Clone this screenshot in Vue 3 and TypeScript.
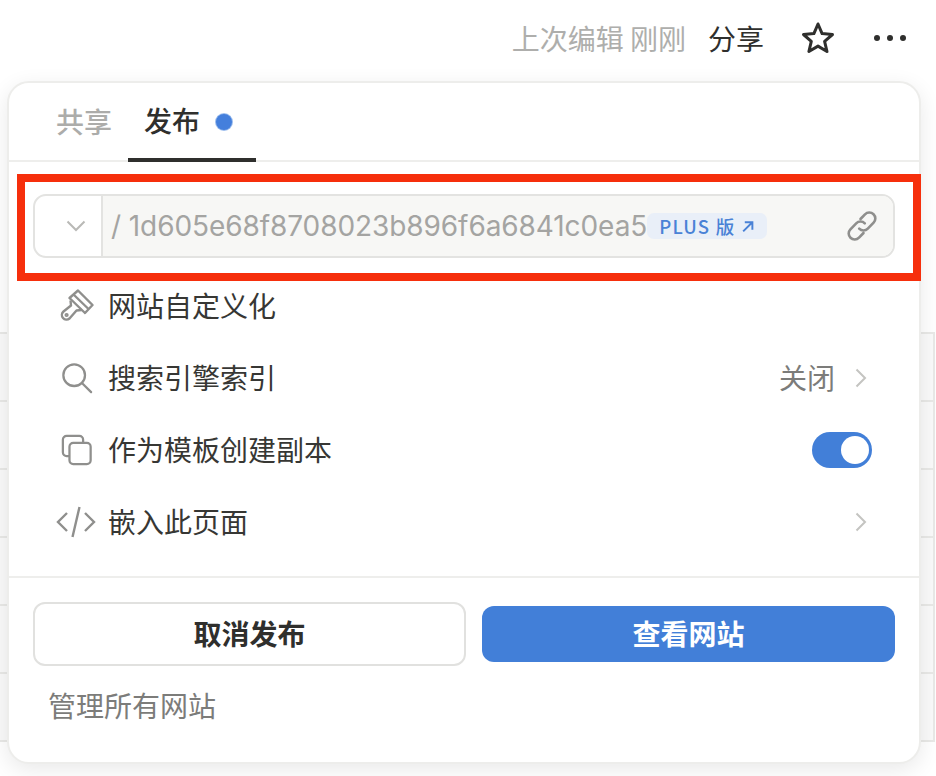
<script setup lang="ts">
const tableRows = [0, 1, 2, 3, 4, 5]
</script>

<template>
  <div class="page">
    <header class="topbar">
      <span class="edited">上次编辑 刚刚</span>
      <span class="share">分享</span>
      <svg class="star" viewBox="0 0 34 34" fill="none" stroke="#2f2f2d" stroke-width="3" stroke-linejoin="round" aria-hidden="true">
        <path d="M17 3l4.100 9.600 10.400.9-7.900 6.800 2.400 10.200L17 25.100 7.900 30.500l2.400-10.200L2.500 13.500l10.400-.9z" />
      </svg>
      <span class="dots"><i></i><i></i><i></i></span>
    </header>

    <div class="table">
      <div v-for="r in tableRows" :key="r" class="table-row"></div>
    </div>

    <section class="popover">
      <nav class="tabs">
        <span class="tab">共享</span>
        <span class="tab active">发布<i class="dot"></i></span>
      </nav>

      <div class="url-wrap">
        <div class="url-box">
          <div class="url-select">
            <svg class="chev-down" viewBox="0 0 20 12" fill="none" stroke="#b9b9b6" stroke-width="2" aria-hidden="true">
              <path d="M1.500 1.500L10 10l8.500-8.500" />
            </svg>
          </div>
          <div class="url-field">
            <span class="url-text">/ 1d605e68f8708023b896f6a6841c0ea5</span>
            <span class="plus">PLUS 版
              <svg class="plus-arrow" viewBox="0 0 12 12" fill="none" stroke="#4a82d6" stroke-width="1.800" aria-hidden="true">
                <path d="M2 10.500l8-8M3.500 2H10.500v7" />
              </svg>
            </span>
            <svg class="link" viewBox="0 0 32 32" fill="none" stroke="#8f8f8d" stroke-width="2.600" stroke-linecap="round" aria-hidden="true">
              <path d="M14.500 9l4.500-4.700a6 6 0 0 1 8.600 8.400l-5.800 6a6 6 0 0 1-8.600 0" />
              <path d="M17.500 23l-4.500 4.700a6 6 0 0 1-8.600-8.400l5.800-6a6 6 0 0 1 8.600 0" />
            </svg>
          </div>
        </div>
      </div>

      <ul class="menu">
        <li class="row">
          <span class="row-icon">
            <svg class="icon brush" viewBox="0 0 34 34" fill="none" stroke="#8f8f8d" stroke-width="2.400" stroke-linejoin="round" aria-hidden="true">
              <path d="M18 1.500L32.500 16 25 24 9.500 9z" />
              <path d="M13.500 5.500L28.500 20" />
              <path d="M10.500 11.500L11 16.500 3.500 22.500A4.300 4.300 0 0 0 9.500 29.500L16.500 21.500 21.500 21" />
              <circle cx="6.600" cy="26" r="0.900" />
            </svg>
          </span>
          <span class="row-label">网站自定义化</span>
        </li>
        <li class="row">
          <span class="row-icon">
            <svg class="icon" viewBox="0 0 34 34" fill="none" stroke="#8f8f8d" stroke-width="2.400" stroke-linecap="round" aria-hidden="true">
              <circle cx="14" cy="14" r="11.500" />
              <path d="M22.500 22.500L32 32" />
            </svg>
          </span>
          <span class="row-label">搜索引擎索引</span>
          <span class="row-value">关闭</span>
          <svg class="chev" viewBox="0 0 12 20" fill="none" stroke="#c4c4c1" stroke-width="2" aria-hidden="true">
            <path d="M1.500 1.500L10 10l-8.500 8.500" />
          </svg>
        </li>
        <li class="row">
          <span class="row-icon">
            <svg class="icon" viewBox="0 0 34 34" fill="none" stroke="#8f8f8d" stroke-width="2.400" aria-hidden="true">
              <path d="M9 23.500H6a4 4 0 0 1-4-4V6a4 4 0 0 1 4-4h13.500a4 4 0 0 1 4 4v3" />
              <rect x="9" y="9.500" width="22.500" height="22.500" rx="4" />
            </svg>
          </span>
          <span class="row-label">作为模板创建副本</span>
          <span class="switch"><i></i></span>
        </li>
        <li class="row">
          <span class="row-icon">
            <svg class="icon code" viewBox="0 0 40 32" fill="none" stroke="#8f8f8d" stroke-width="2.400" aria-hidden="true">
              <path d="M11 7l-9 9 9 9M29 7l9 9-9 9M23.500 1l-7 30" />
            </svg>
          </span>
          <span class="row-label">嵌入此页面</span>
          <svg class="chev push" viewBox="0 0 12 20" fill="none" stroke="#c4c4c1" stroke-width="2" aria-hidden="true">
            <path d="M1.500 1.500L10 10l-8.500 8.500" />
          </svg>
        </li>
      </ul>

      <footer class="footer">
        <div class="actions">
          <button class="btn ghost">取消发布</button>
          <button class="btn primary">查看网站</button>
        </div>
        <a class="manage">管理所有网站</a>
      </footer>
    </section>

    <div class="annotation"></div>
  </div>
</template>

<style>
html,
body {
  margin: 0;
  background: #fff;
}
</style>

<style scoped>
.page {
  position: relative;
  width: 936px;
  height: 776px;
  overflow: hidden;
  background: #fff;
  font-family: "Noto Sans CJK SC", "Liberation Sans", sans-serif;
  color: #373734;
}

.topbar {
  height: 75px;
  display: flex;
  align-items: center;
  justify-content: flex-end;
  padding-right: 30px;
  font-size: 28px;
  box-sizing: border-box;
}

.edited {
  color: #aeaeac;
  margin-right: 22px;
}

.share {
  color: #2f2f2d;
  margin-right: 37px;
}

.star {
  width: 34px;
  height: 34px;
  margin-right: 39px;
}

.dots {
  display: flex;
  gap: 7px;

  i {
    width: 6px;
    height: 6px;
    border-radius: 50%;
    background: #2f2f2d;
  }
}

.table {
  margin-top: 257px;
  width: 935px;
  border-right: 2px solid #e9e9e7;
  border-top: 2px solid #e9e9e7;
  box-sizing: border-box;
}

.table-row {
  height: 68px;
  box-sizing: border-box;
  border-bottom: 2px solid #e9e9e7;
  background: #fafafa;
}

.popover {
  position: absolute;
  left: 7px;
  top: 81px;
  width: 914px;
  height: 683px;
  box-sizing: border-box;
  background: #fff;
  border: 2px solid #ededeb;
  border-radius: 22px;
  box-shadow: 0 6px 22px rgba(0, 0, 0, 0.09);
}

.tabs {
  height: 79px;
  display: flex;
  box-sizing: border-box;
  border-bottom: 2px solid #eeeeec;
  padding-left: 31px;
}

.tab {
  display: flex;
  align-items: center;
  height: 79px;
  box-sizing: border-box;
  padding: 0 16px 3px;
  font-size: 28px;
  font-weight: 500;
  color: #acacaa;
}

.tab.active {
  width: 128px;
  color: #2f2f2d;
  border-bottom: 4px solid #2f2f2d;
  padding-top: 1px;
}

.dot {
  width: 16px;
  height: 16px;
  margin: 5px 0 0 16px;
  border-radius: 50%;
  background: #447fdc;
  box-shadow: 0 0 0 1px #9dbeee;
}

.url-wrap {
  padding: 32px 24px 0;
}

.url-box {
  height: 64px;
  display: flex;
  box-sizing: border-box;
  border: 2px solid #e3e3e1;
  border-radius: 13px;
  overflow: hidden;
}

.url-select {
  width: 68px;
  display: flex;
  align-items: center;
  justify-content: center;
  box-sizing: border-box;
  border-right: 2px solid #e3e3e1;
}

.chev-down {
  width: 20px;
  height: 12px;
  margin-left: 16px;
}

.url-field {
  flex: 1;
  display: flex;
  align-items: center;
  background: #f7f7f5;
  padding-left: 8px;
}

.url-text {
  font-family: "Inter", "Liberation Sans", sans-serif;
  font-size: 28px;
  letter-spacing: -0.08px;
  color: #a4a4a2;
  white-space: nowrap;
}

.plus {
  display: flex;
  align-items: center;
  height: 26px;
  padding: 0 13px 0 12px;
  border-radius: 7px;
  background: #e9eff8;
  font-size: 18.500px;
  font-weight: 500;
  letter-spacing: 1.200px;
  color: #4a82d6;
  white-space: nowrap;
}

.plus-arrow {
  width: 13px;
  height: 13px;
  margin-left: 6px;
}

.link {
  width: 32px;
  height: 32px;
  margin-left: auto;
  margin-right: 15px;
}

.menu {
  list-style: none;
  margin: 12px 0 0;
  padding: 0 52px 0 0;
}

.row {
  height: 72px;
  display: flex;
  align-items: center;
  font-size: 28px;
  color: #373734;
}

.row-label,
.row-value {
  margin-bottom: 3px;
}

.row-icon {
  width: 99px;
  padding-left: 52px;
  box-sizing: border-box;
  flex: none;
  display: flex;
}

.icon {
  width: 32px;
  height: 32px;
  flex: none;
}

.icon.brush {
  width: 34px;
  height: 34px;
  margin-left: -1px;
}

.icon.code {
  width: 40px;
  height: 32px;
  margin-left: -5px;
}

.row-value {
  margin-left: auto;
  color: #7c7c7a;
}

.chev {
  width: 12px;
  height: 20px;
  margin-left: 20px;
}

.chev.push {
  margin-left: auto;
}

.switch {
  margin-left: auto;
  margin-right: -5px;
  width: 60px;
  height: 36px;
  box-sizing: border-box;
  padding: 4px 3px;
  display: flex;
  justify-content: flex-end;
  border-radius: 18px;
  background: #427fd8;

  i {
    width: 28px;
    height: 28px;
    border-radius: 50%;
    background: #fff;
  }
}

.footer {
  margin-top: 18px;
  border-top: 2px solid #eeeeec;
  padding: 24px 24px 0;
}

.actions {
  display: flex;
  align-items: center;
  gap: 16px;
}

.btn {
  font-family: inherit;
  font-size: 28px;
  font-weight: 700;
  box-sizing: border-box;
  border-radius: 12px;
  padding-bottom: 3px;
}

.ghost {
  width: 434px;
  height: 64px;
  background: #fff;
  border: 2px solid #e1e1df;
  color: #2f2f2d;
}

.primary {
  width: 414px;
  height: 56px;
  background: #427fd8;
  border: none;
  color: #fff;
}

.manage {
  display: block;
  margin: 18px 0 0 15px;
  font-size: 28px;
  line-height: 42px;
  color: #7c7c7a;
}

.annotation {
  position: absolute;
  left: 17px;
  top: 174px;
  width: 904px;
  height: 107px;
  box-sizing: border-box;
  border: 8px solid #f62f0c;
}
</style>
